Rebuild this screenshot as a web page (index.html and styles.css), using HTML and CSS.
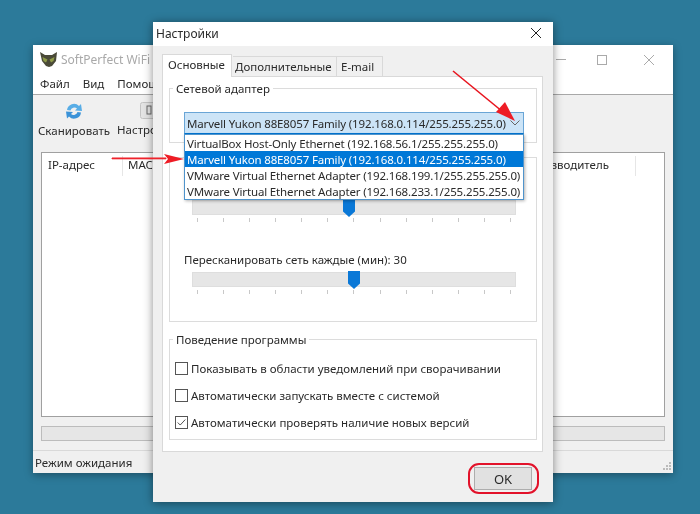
FILE: index.html
```html
<!DOCTYPE html>
<html lang="ru">
<head>
<meta charset="utf-8">
<title>Настройки</title>
<link rel="stylesheet" href="styles.css">
</head>
<body>
<div class="desktop">
  <section class="win">
    <header class="win-head">
      <div class="win-title">
        <svg class="owl" viewBox="0 0 17 15" width="17" height="15"><path d="M0 0 5 3h7l5-3-1 9-4 5-3 1-3-1-4-5z" fill="#4a4a38"/><path d="M2.500 5 7.500 7.500 6 10.500 3.500 9zM14.500 5 9.500 7.500 11 10.500 13.500 9z" fill="#8f9c48"/></svg>
        <span class="win-name">SoftPerfect WiFi Guard</span>
        <div class="win-ctrls">
          <span class="ctl-min"></span>
          <span class="ctl-max"></span>
          <svg class="ctl-x" viewBox="0 0 10 10" width="10" height="10"><path d="M0 0 10 10M10 0 0 10" stroke="#aaa" stroke-width="1" fill="none"/></svg>
        </div>
      </div>
      <nav class="menu"><span>Файл</span><span>Вид</span><span>Помощь</span></nav>
    </header>
    <div class="toolbar">
      <div class="tool tool-scan">
        <svg viewBox="0 0 18 18" width="18" height="18"><path d="M2 8A7 7 0 0 1 14 4L16 2 17 9 10 8.500 12 6.500A4 4 0 0 0 5.500 8.500z" fill="#58ade6"/><path d="M16 10.500A7 7 0 0 1 4 14.500L2 16.500 1 9.500 8 10 6 12A4 4 0 0 0 12.500 10z" fill="#3a92d8"/></svg>
        <span>Сканировать</span>
      </div>
      <div class="tool tool-set">
        <svg viewBox="0 0 18 17" width="18" height="17"><rect x=".5" y=".5" width="17" height="16" rx="2" fill="#e4e4e4" stroke="#c4c4c4"/><rect x="7" y="4" width="4" height="8" fill="none" stroke="#666"/></svg>
        <span>Настройки</span>
      </div>
    </div>
    <div class="list">
      <div class="list-head">
        <span class="col col-ip">IP-адрес</span>
        <span class="col col-mac">MAC-адрес</span>
        <span class="col col-vendor">Производитель</span>
      </div>
    </div>
    <div class="progress"></div>
    <footer class="status">
      <span>Режим ожидания</span>
      <svg class="grip" viewBox="0 0 10 10" width="10" height="10"><path d="M7 1h2v2H7zM4 4h2v2H4zM7 4h2v2H7zM1 7h2v2H1zM4 7h2v2H4zM7 7h2v2H7z" fill="#bbb"/></svg>
    </footer>
  </section>

  <section class="dialog">
    <header class="dlg-title">
      <span>Настройки</span>
      <svg viewBox="0 0 10 10" width="10" height="10"><path d="M0 0 10 10M10 0 0 10" stroke="#222" stroke-width="1" fill="none"/></svg>
    </header>
    <div class="tabs">
      <span class="tab tab-on">Основные</span>
      <span class="tab tab-mid">Дополнительные</span>
      <span class="tab tab-end">E-mail</span>
    </div>
    <div class="panel">
      <div class="group group-net">
        <span class="legend">Сетевой адаптер</span>
        <div class="combo">
          <span>Marvell Yukon 88E8057 Family (192.168.0.114/255.255.255.0)</span>
          <svg viewBox="0 0 10 6" width="10" height="6"><path d="M.5 .5 5 5 9.500 .5" stroke="#666" fill="none"/></svg>
          <ul class="drop">
            <li>VirtualBox Host-Only Ethernet (192.168.56.1/255.255.255.0)</li>
            <li class="sel">Marvell Yukon 88E8057 Family (192.168.0.114/255.255.255.0)</li>
            <li>VMware Virtual Ethernet Adapter (192.168.199.1/255.255.255.0)</li>
            <li>VMware Virtual Ethernet Adapter (192.168.233.1/255.255.255.0)</li>
          </ul>
        </div>
      </div>
      <div class="group group-scan">
        <div class="slider slider-a">
          <div class="track"><span class="thumb thumb-a"></span></div>
          <div class="ticks"><i></i><i></i><i></i><i></i><i></i><i></i><i></i><i></i><i></i><i></i><i></i><i></i><i></i></div>
        </div>
        <div class="slider-label">Пересканировать сеть каждые (мин): 30</div>
        <div class="slider">
          <div class="track"><span class="thumb thumb-b"></span></div>
          <div class="ticks"><i></i><i></i><i></i><i></i><i></i><i></i><i></i><i></i><i></i><i></i><i></i><i></i><i></i></div>
        </div>
      </div>
      <div class="group group-app">
        <span class="legend">Поведение программы</span>
        <label class="check"><span class="box"></span>Показывать в области уведомлений при сворачивании</label>
        <label class="check"><span class="box"></span>Автоматически запускать вместе с системой</label>
        <label class="check"><span class="box"><svg viewBox="0 0 13 13" width="11" height="11"><path d="M2 6.500 5 9.500 11 3" stroke="#333" fill="none"/></svg></span>Автоматически проверять наличие новых версий</label>
      </div>
    </div>
    <footer class="dlg-foot"><button class="ok">OK</button></footer>
  </section>

  <svg class="marks" viewBox="0 0 700 514" width="700" height="514">
    <path d="M112 158H166V158.800H112z" fill="#ee1c25" stroke="#ee1c25"/>
    <path d="M164 154 184 159 164 164 168 159z" fill="#ee1c25"/>
    <path d="M453 71 503 112" stroke="#e8141e" stroke-width="1.600" fill="none"/>
    <path d="M515 121 496 112 505 102z" fill="#ee1c25"/>
    <rect x="469" y="464" width="69" height="29" rx="10" fill="none" stroke="#e2122a" stroke-width="2"/>
  </svg>
</div>
</body>
</html>
```
FILE: styles.css
```css
* { box-sizing: border-box; }
html, body { margin: 0; padding: 0; }
body { font-family: "Noto Sans", "Open Sans", sans-serif; font-size: 11.5px; color: #2a2a2a; }
.desktop { position: relative; width: 700px; height: 514px; background: #2c7a9a; overflow: hidden; filter: blur(0.4px); }

.win { position: absolute; left: 33px; top: 45px; width: 640px; height: 428px; background: #f0f0f0; display: flex; flex-direction: column; box-shadow: 0 2px 8px rgba(0,0,0,.35); }
.win-head { background: #fff; height: 50px; border-bottom: 1px solid #a8a8a8; display: flex; flex-direction: column; }
.win-title { height: 30px; display: flex; align-items: center; padding-left: 7px; }
.owl { margin-right: 4px; }
.win-name { color: #a9a9a9; font-size: 12px; width: 92px; overflow: hidden; white-space: nowrap; }
.win-ctrls { margin-left: auto; display: flex; align-items: center; padding-right: 19px; }
.ctl-min { width: 10px; height: 1px; background: #aaa; margin-right: 31px; }
.ctl-max { width: 10px; height: 10px; border: 1px solid #aaa; margin-right: 37px; }
.menu { display: flex; gap: 13px; padding-left: 7px; line-height: 20px; }
.toolbar { height: 57px; display: flex; padding: 7px 0 0 5px; gap: 7px; }
.tool { display: flex; flex-direction: column; align-items: center; gap: 2px; line-height: 17px; }
.tool-set svg { margin-left: 4px; }
.list { margin: 0 8px; height: 265px; background: #fff; border: 1px solid #a0a0a0; }
.list-head { position: relative; height: 24px; }
.col { position: absolute; top: 3px; line-height: 17px; }
.col-ip { left: 6px; }
.col-mac { left: 86px; }
.col-mac::before { content: ""; position: absolute; left: -6px; top: 0; height: 20px; width: 1px; background: #e6e6e6; }
.col-vendor { left: 480px; }
.col-vendor::after { content: ""; position: absolute; right: -27px; top: 0; height: 20px; width: 1px; background: #e6e6e6; }
.progress { margin: 9px 8px 0; height: 15px; background: #e6e6e6; border: 1px solid #bcbcbc; }
.status { margin-top: 9px; flex: 1; border-top: 1px solid #d9d9d9; display: flex; align-items: flex-end; justify-content: space-between; padding: 0 1px 2px 2px; line-height: 17px; }

.dialog { position: absolute; left: 153px; top: 22px; width: 400px; height: 480px; background: #f0f0f0; display: flex; flex-direction: column; box-shadow: 0 1px 9px rgba(0,0,0,.45); }
.dlg-title { height: 24px; background: #fff; display: flex; align-items: center; justify-content: space-between; padding: 0 12px 2px 3px; font-size: 12px; }
.tabs { display: flex; align-items: flex-end; height: 31px; padding-left: 9px; position: relative; z-index: 1; margin-bottom: -1px; }
.tab { background: #f0f0f0; border: 1px solid #d9d9d9; border-bottom: 0; height: 20px; line-height: 20px; margin-bottom: 1px; }
.tab-on { background: #fff; height: 23px; width: 70px; margin-bottom: 0; line-height: 20px; padding-left: 5px; }
.tab-mid { width: 104px; padding-left: 2px; margin-left: 1px; border-left: 0; }
.tab-end { width: 46px; padding-left: 4px; border-left: 0; }
.panel { margin: 0 10px 0 9px; height: 376px; background: #fff; border: 1px solid #d9d9d9; padding: 11px 5px 11px 6px; display: flex; flex-direction: column; }
.group { position: relative; border: 1px solid #dcdcdc; }
.legend { position: absolute; left: 3px; top: -9px; background: #fff; padding: 0 3px; line-height: 17px; }
.group-net { height: 55px; padding: 23px 12px 0 14px; }
.combo { position: relative; height: 22px; display: flex; align-items: center; justify-content: space-between; padding: 0 3px 0 2px; background: #cce4f7; border: 1px solid #69a5d6; border-bottom-color: #0078d7; letter-spacing: -0.15px; white-space: nowrap; }
.drop { position: absolute; left: -1px; right: -1px; top: 21px; margin: 0; padding: 0; list-style: none; background: #fff; border: 1px solid #4f94cc; box-shadow: 1px 1px 3px rgba(0,0,0,.3); z-index: 3; }
.drop li { height: 16px; line-height: 17px; padding-left: 2px; white-space: nowrap; }
.drop .sel { background: #0078d7; color: #fff; }
.group-scan { margin-top: 14px; height: 165px; padding-top: 42px; }
.slider { margin: 0 20px 0 22px; }
.slider-a { margin-bottom: 30px; }
.slider-label { margin-left: 14px; height: 20px; line-height: 16px; }
.track { position: relative; height: 15px; background: #e6e6e6; border: 1px solid #dedede; }
.thumb { position: absolute; top: -2px; width: 12px; height: 18px; background: #0a78d7; clip-path: polygon(0 0, 100% 0, 100% 70%, 50% 100%, 0 70%); }
.thumb-a { left: 150px; }
.thumb-b { left: 155px; }
.ticks { display: flex; justify-content: space-between; padding: 3px 5px 0; height: 7px; }
.ticks i { width: 1px; height: 4px; background: #c8c8c8; }
.group-app { margin-top: 17px; height: 101px; padding: 15px 0 0 5px; }
.check { display: flex; align-items: center; height: 27px; gap: 3px; }
.box { width: 13px; height: 13px; border: 1px solid #555; background: #fff; display: flex; align-items: center; justify-content: center; }
.dlg-foot { display: flex; justify-content: flex-end; padding: 15px 21px 0 0; }
.ok { width: 58px; height: 23px; padding: 0; background: #e1e1e1; border: 1px solid #adadad; font: inherit; font-size: 13px; color: #2a2a2a; }

.marks { position: absolute; left: 0; top: 0; }
```
